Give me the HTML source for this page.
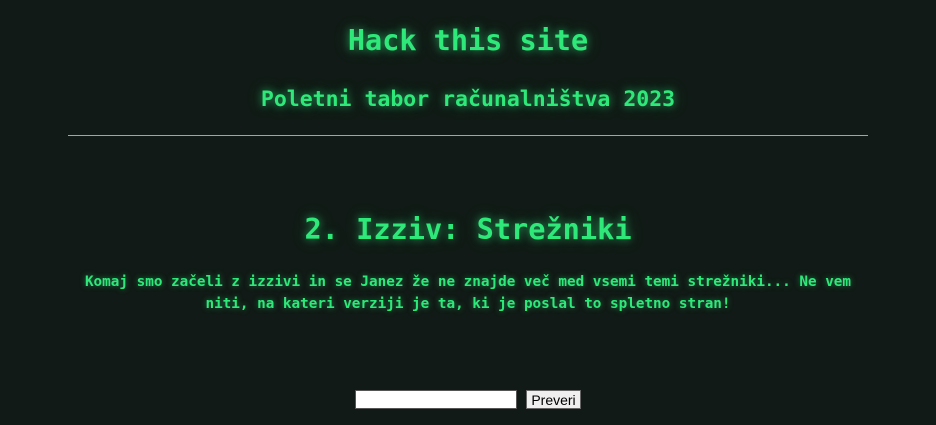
<!DOCTYPE html>
<html><head><meta charset="utf-8"><style>
html,body{margin:0;padding:0;background:#111a16;width:936px;height:425px;overflow:hidden}
body{font-family:"DejaVu Sans Mono","Liberation Mono",monospace;color:#2ee87a;text-align:center;position:relative}
.t{position:absolute;left:0;right:0;font-weight:bold;text-shadow:0 0 8px rgba(46,232,122,.55),0 0 16px rgba(46,232,122,.3);white-space:nowrap}
.hr{position:absolute;left:68px;top:135px;width:800px;height:1px;background:#2ee87a}
p{position:absolute;left:70px;width:796px;top:272px;margin:0;font-size:14.3px;line-height:21.5px;font-weight:bold;text-shadow:0 0 6px rgba(46,232,122,.5)}
.f{position:absolute;top:390px;left:355px}
input{box-sizing:border-box;width:162px;height:19px;border:1px solid #555;background:#fff;position:absolute;left:0;top:0;margin:0}
button{box-sizing:border-box;position:absolute;left:171px;top:0;height:19px;width:55px;border:1px solid #666;background:#efefef;font:14px "Liberation Sans",sans-serif;padding:0;color:#000;margin:0}
</style></head><body>
<div class="t" style="top:22px;font-size:28.5px;line-height:38px">Hack this site</div>
<div class="t" style="top:86px;font-size:21.5px;line-height:28px">Poletni tabor računalništva 2023</div>
<div class="hr"></div>
<div class="t" style="top:210px;font-size:28.6px;line-height:38px">2. Izziv: Strežniki</div>
<p>Komaj smo začeli z izzivi in se Janez že ne znajde več med vsemi temi strežniki... Ne vem niti, na kateri verziji je ta, ki je poslal to spletno stran!</p>
<div class="f"><input type="text"><button>Preveri</button></div>
</body></html>
